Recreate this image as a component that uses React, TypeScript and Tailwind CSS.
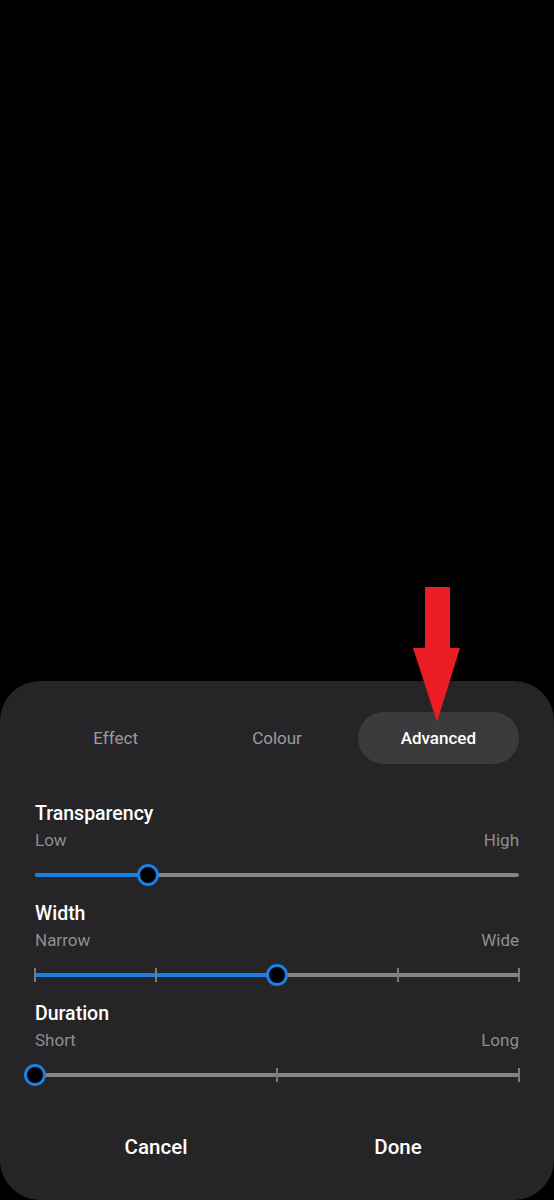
import React from "react";

const FONT = "font-['Roboto','Noto_Sans',sans-serif]";

interface SliderProps {
  value: number; // 0..1
  ticks?: number[];
}

function Slider({ value, ticks = [] }: SliderProps) {
  const pct = `${value * 100}%`;
  return (
    <div className="relative h-[42px] flex items-center">
      <div className="relative w-full h-[4px] rounded-full bg-[#858585]">
        <div className="absolute left-0 top-0 h-full rounded-full bg-[#1c7fe3]" style={{ width: pct }} />
      </div>
      {/* tick marks */}
      {ticks.map((t) => (
        <div
          key={t}
          className="absolute top-1/2 -translate-y-1/2 -translate-x-1/2 w-[2px] h-[14px] bg-[#7a7a7a]"
          style={{ left: `${t * 100}%` }}
        />
      ))}
      {/* thumb */}
      <div
        className="absolute top-1/2 -translate-y-1/2 -translate-x-1/2 w-[22px] h-[22px] rounded-full bg-black border-[3px] border-[#1c7fe3]"
        style={{ left: pct }}
      />
    </div>
  );
}

interface SectionProps {
  title: string;
  low: string;
  high: string;
  value: number;
  ticks?: number[];
}

function Section({ title, low, high, value, ticks }: SectionProps) {
  return (
    <div className="h-[100px] flex flex-col">
      <div className="h-[27px] pt-[1px] flex items-center text-[19.5px] font-medium text-white">{title}</div>
      <div className="h-[27px] flex items-center justify-between text-[17px] text-[#8f8f8f]">
        <span>{low}</span>
        <span>{high}</span>
      </div>
      <Slider value={value} ticks={ticks} />
    </div>
  );
}

export default function App() {
  return (
    <div className={`relative w-[554px] h-[1200px] bg-black flex flex-col overflow-hidden ${FONT}`}>
      <div className="h-[681px] shrink-0" />

      {/* Bottom sheet */}
      <div className="flex-1 bg-[#252528] rounded-[40px] px-[35px] pt-[31px] flex flex-col">
        {/* Tabs */}
        <div className="grid grid-cols-3 h-[52px] text-[17px]">
          <div className="flex items-center justify-center pt-[1px] text-[#9d9d9f]">Effect</div>
          <div className="flex items-center justify-center pt-[1px] text-[#9d9d9f]">Colour</div>
          <div className="flex items-center justify-center pt-[1px] rounded-full bg-[#3b3b3e] text-white font-medium">
            Advanced
          </div>
        </div>

        <div className="mt-[36px] flex flex-col">
          <Section title="Transparency" low="Low" high="High" value={0.234} />
          <Section title="Width" low="Narrow" high="Wide" value={0.5} ticks={[0, 0.25, 0.75, 1]} />
          <Section title="Duration" low="Short" high="Long" value={0} ticks={[0.5, 1]} />
        </div>

        {/* Actions */}
        <div className="grid grid-cols-2 h-[90px] pt-[4px] text-[20.5px] font-medium text-white">
          <button className="flex items-center justify-center">Cancel</button>
          <button className="flex items-center justify-center">Done</button>
        </div>
      </div>

      {/* Red annotation arrow */}
      <svg className="absolute left-[411px] top-[586px]" width="52" height="138" viewBox="0 0 52 138">
        <polygon points="14,1 39,1 39,62 49,62 26,136 2,62 14,62" fill="#ec1c24" />
      </svg>
    </div>
  );
}
